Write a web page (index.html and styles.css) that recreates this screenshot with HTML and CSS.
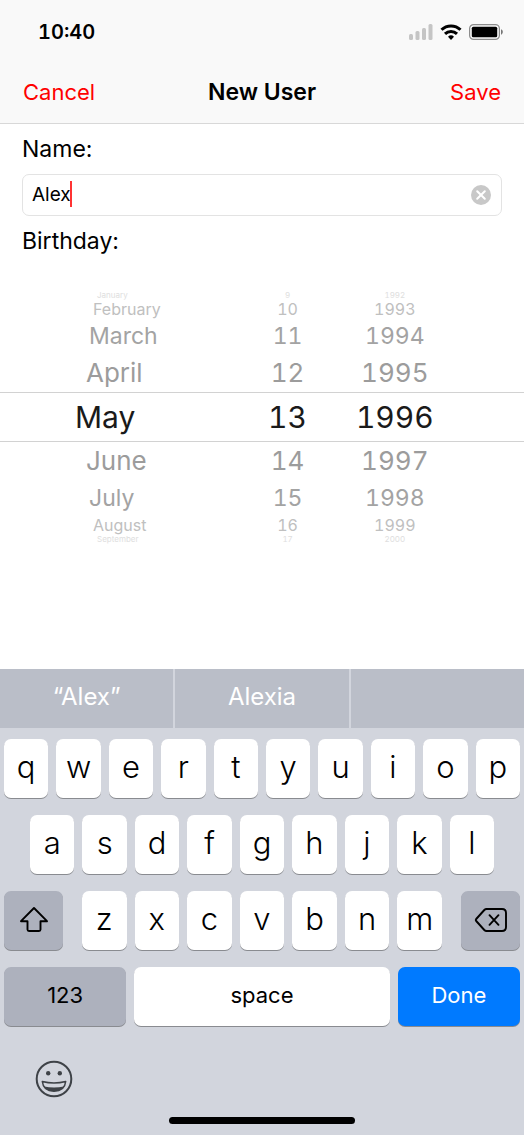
FILE: index.html
```html
<!DOCTYPE html>
<html lang="en">
<head>
<meta charset="utf-8">
<meta name="viewport" content="width=device-width, initial-scale=1">
<title>New User</title>
<link rel="stylesheet" href="styles.css">
</head>
<body>
<header class="header">
  <div class="status">
    <time class="clock">10:40</time>
    <div class="status-icons">
      <svg width="25" height="16" viewBox="0 0 25 16" fill="#c5c5c5" aria-hidden="true"><rect x="1" y="10" width="4" height="6" rx="1.500"/><rect x="7.500" y="7" width="4" height="9" rx="1.500"/><rect x="14" y="4" width="4" height="12" rx="1.500"/><rect x="20.500" y="0" width="4" height="16" rx="1.500"/></svg>
      <svg width="22" height="16" viewBox="0 0 22 16" fill="none" stroke="#000" stroke-width="3" aria-hidden="true"><path d="M1.500 5.800a13.600 13.600 0 0 1 19 0"/><path d="M5 9.800a8.700 8.700 0 0 1 12 0"/><path d="M11 16l-3-3.200a4.300 4.300 0 0 1 6 0z" fill="#000" stroke="none"/></svg>
      <svg width="35" height="16" viewBox="0 0 35 16" aria-hidden="true"><rect x=".6" y=".6" width="29.800" height="14.800" rx="4" fill="none" stroke="#8c8c8c" stroke-width="1.200"/><rect x="2.800" y="2.800" width="25.400" height="10.400" rx="1.500" fill="#000"/><path d="M32 5.300c2.400.8 2.400 4.600 0 5.400z" fill="#777"/></svg>
    </div>
  </div>
  <nav class="navbar">
    <button class="nav-button" type="button">Cancel</button>
    <h1 class="title">New User</h1>
    <button class="nav-button nav-save" type="button">Save</button>
  </nav>
</header>

<main class="form">
  <label class="label" for="name">Name:</label>
  <div class="field">
    <input class="input" id="name" type="text" value="Alex" autocomplete="off">
    <span class="caret"></span>
    <button class="clear" type="button" aria-label="Clear">
      <svg width="20" height="20" viewBox="0 0 20 20" aria-hidden="true"><circle cx="10" cy="10" r="10" fill="#c8c8c8"/><path d="M6.200 6.200l7.600 7.600M13.800 6.200l-7.600 7.600" stroke="#fff" stroke-width="2" stroke-linecap="round"/></svg>
    </button>
  </div>
  <p class="label" id="birthday">Birthday:</p>
</main>

<section class="picker" aria-labelledby="birthday">
  <ul class="wheel months">
    <li class="far">January</li><li class="outer">February</li><li class="mid">March</li><li class="near">April</li>
    <li class="selected">May</li>
    <li class="near">June</li><li class="mid">July</li><li class="outer">August</li><li class="far">September</li>
  </ul>
  <ul class="wheel days">
    <li class="far">9</li><li class="outer">10</li><li class="mid">11</li><li class="near">12</li>
    <li class="selected">13</li>
    <li class="near">14</li><li class="mid">15</li><li class="outer">16</li><li class="far">17</li>
  </ul>
  <ul class="wheel years">
    <li class="far">1992</li><li class="outer">1993</li><li class="mid">1994</li><li class="near">1995</li>
    <li class="selected">1996</li>
    <li class="near">1997</li><li class="mid">1998</li><li class="outer">1999</li><li class="far">2000</li>
  </ul>
</section>

<section class="keyboard" aria-label="Keyboard">
  <div class="suggestions">
    <button class="suggestion" type="button">“Alex”</button>
    <button class="suggestion" type="button">Alexia</button>
    <button class="suggestion" type="button" aria-label="No suggestion"></button>
  </div>
  <div class="keys">
    <div class="row">
      <button class="key" type="button">q</button><button class="key" type="button">w</button><button class="key" type="button">e</button><button class="key" type="button">r</button><button class="key" type="button">t</button><button class="key" type="button">y</button><button class="key" type="button">u</button><button class="key" type="button">i</button><button class="key" type="button">o</button><button class="key" type="button">p</button>
    </div>
    <div class="row row-home">
      <button class="key" type="button">a</button><button class="key" type="button">s</button><button class="key" type="button">d</button><button class="key" type="button">f</button><button class="key" type="button">g</button><button class="key" type="button">h</button><button class="key" type="button">j</button><button class="key" type="button">k</button><button class="key" type="button">l</button>
    </div>
    <div class="row row-shift">
      <button class="key key-dark" type="button" aria-label="Shift">
        <svg width="30" height="28" viewBox="0 0 30 28" fill="none" stroke="#000" stroke-width="1.900" stroke-linejoin="round" aria-hidden="true"><path d="M15 2L28 15.200H21.500V23.500Q21.500 25 20 25H10Q8.500 25 8.500 23.500V15.200H2Z"/></svg>
      </button>
      <div class="row">
        <button class="key" type="button">z</button><button class="key" type="button">x</button><button class="key" type="button">c</button><button class="key" type="button">v</button><button class="key" type="button">b</button><button class="key" type="button">n</button><button class="key" type="button">m</button>
      </div>
      <button class="key key-dark" type="button" aria-label="Delete">
        <svg width="34" height="26" viewBox="0 0 34 26" fill="none" stroke="#000" stroke-width="1.900" stroke-linecap="round" stroke-linejoin="round" aria-hidden="true"><path d="M12.500 2H28Q32 2 32 6V20Q32 24 28 24H12.500Q11.300 24 10.300 23L2.200 14Q1.300 13 2.200 12L10.300 3Q11.300 2 12.500 2Z"/><path d="M15.500 8.200l9 9.600M24.500 8.200l-9 9.600"/></svg>
      </button>
    </div>
    <div class="row row-bottom">
      <button class="key key-dark key-word" type="button">123</button>
      <button class="key key-word" type="button">space</button>
      <button class="key key-done key-word" type="button">Done</button>
    </div>
  </div>
  <div class="dock">
    <button class="emoji" type="button" aria-label="Emoji">
      <svg width="38" height="38" viewBox="0 0 38 38" fill="none" stroke="#3e4247" aria-hidden="true"><circle cx="19" cy="19" r="17.300" stroke-width="2"/><g fill="#3e4247" stroke="none"><circle cx="13.200" cy="13.300" r="2.200"/><circle cx="24.800" cy="13.300" r="2.200"/><path d="M9 26.500Q19 28.500 29 26.500Q26 31.300 19 31.300Q12 31.300 9 26.500Z"/></g><path d="M7.300 21.500Q19 24.500 30.700 21.500C30 28 25.500 31.300 19 31.300S8 28 7.300 21.500Z" stroke-width="1.500" stroke-linejoin="round"/></svg>
    </button>
    <div class="home-bar"></div>
  </div>
</section>
</body>
</html>
```
FILE: styles.css
```css
* {
  box-sizing: border-box;
}

body {
  display: flex;
  flex-direction: column;
  min-height: 100vh;
  margin: 0;
  background: #fff;
  color: #000;
  font-family: Inter, "Liberation Sans", sans-serif;
  font-size: 22px;
}

button {
  margin: 0;
  padding: 0;
  border: 0;
  background: none;
  color: inherit;
  font: inherit;
}

svg {
  display: block;
}

/* Header */
.header {
  background: #f9f9f9;
  border-bottom: 1px solid #d8d8d8;
}

.status {
  display: flex;
  align-items: center;
  justify-content: space-between;
  height: 64px;
  padding: 0 20px 0 38px;
}

.clock {
  font-size: 20px;
  font-weight: 600;
  font-variant-numeric: tabular-nums;
}

.status-icons {
  display: flex;
  gap: 7px;
}

.navbar {
  display: grid;
  grid-template-columns: 1fr auto 1fr;
  align-items: center;
  height: 59px;
  padding: 0 23px 3px;
}

.nav-button {
  color: #ff0000;
  text-align: left;
}

.nav-save {
  text-align: right;
}

.title {
  margin: 0;
  font-size: 23px;
  font-weight: 600;
}

/* Form */
.form {
  display: flex;
  flex-direction: column;
  gap: 9px;
  padding: 9px 22px 0;
}

.label {
  margin: 0;
  font-size: 23px;
  line-height: 32px;
}

.field {
  position: relative;
  display: flex;
  align-items: center;
  height: 42px;
  padding: 0 10px 0 9px;
  border: 1px solid #e3e3e3;
  border-radius: 7px;
}

.input {
  flex: 1;
  min-width: 0;
  padding: 0 0 2px;
  border: 0;
  outline: 0;
  background: none;
  color: inherit;
  font: inherit;
  font-size: 19px;
}

.caret {
  position: absolute;
  top: 6px;
  left: 47px;
  width: 2px;
  height: 26px;
  background: #ff3333;
}

/* Date wheels */
.picker {
  display: grid;
  grid-template-columns: 48% 13% 1fr;
  margin: 33px 0 24px;
  font-variant-numeric: tabular-nums;
}

.wheel {
  margin: 0;
  padding: 0;
  list-style: none;
  text-align: center;
}

.wheel li {
  white-space: nowrap;
}

.months li {
  padding-left: 86px;
  text-align: left;
}

.days li {
  padding-left: 4px;
}

.years li {
  padding-right: 54px;
}

.wheel .selected {
  height: 50px;
  border: solid #d2d2d2;
  border-width: 1px 0;
  color: #1a1a1a;
  font-size: 30px;
  line-height: 48px;
}

.months .selected {
  padding-left: 75px;
}

.wheel .near {
  height: 38px;
  color: #9c9c9c;
  font-size: 26px;
  line-height: 38px;
}

.wheel .mid {
  height: 36px;
  color: #a3a3a3;
  font-size: 23px;
  line-height: 36px;
}

.months .mid {
  padding-left: 89px;
}

.wheel .outer {
  height: 18px;
  color: #c0c0c0;
  font-size: 16px;
  line-height: 18px;
}

.months .outer {
  padding-left: 93px;
}

.wheel .far {
  height: 10px;
  color: #dedede;
  font-size: 8px;
  line-height: 10px;
}

.months .far {
  padding-left: 97px;
}

/* Keyboard */
.keyboard {
  margin-top: auto;
  background: #d2d5dd;
}

.suggestions {
  display: grid;
  grid-template-columns: repeat(3, 1fr);
  gap: 2px;
  height: 59px;
}

.suggestion {
  padding-bottom: 5px;
  background: #babec8;
  color: #fff;
  font-size: 24px;
}

.keys {
  display: flex;
  flex-direction: column;
  gap: 17px;
  padding: 11px 4px 0;
}

.row {
  display: grid;
  grid-auto-flow: column;
  grid-auto-columns: 1fr;
  gap: 8px;
}

.row-home {
  padding: 0 26px;
}

.row-shift {
  grid-template-columns: 59fr 360fr 59fr;
  gap: 19px;
}

.row-bottom {
  grid-template-columns: 122fr 255fr 122fr;
}

.key {
  display: flex;
  align-items: center;
  justify-content: center;
  min-width: 0;
  height: 59px;
  padding-bottom: 4px;
  border-radius: 7px;
  background: #fff;
  box-shadow: 0 1px 0 #898b90;
  font-size: 31px;
  font-weight: 300;
}

.key-dark {
  padding-bottom: 1px;
  background: #adb1bd;
}

.key-word {
  padding-bottom: 3px;
  font-size: 22px;
  font-weight: 400;
}

.key-done {
  background: #007aff;
  color: #fff;
}

.dock {
  padding: 34px 0 11px 35px;
}

.emoji {
  display: block;
}

.home-bar {
  width: 38%;
  height: 7px;
  margin: 19px auto 0 134px;
  border-radius: 4px;
  background: #000;
}
```
